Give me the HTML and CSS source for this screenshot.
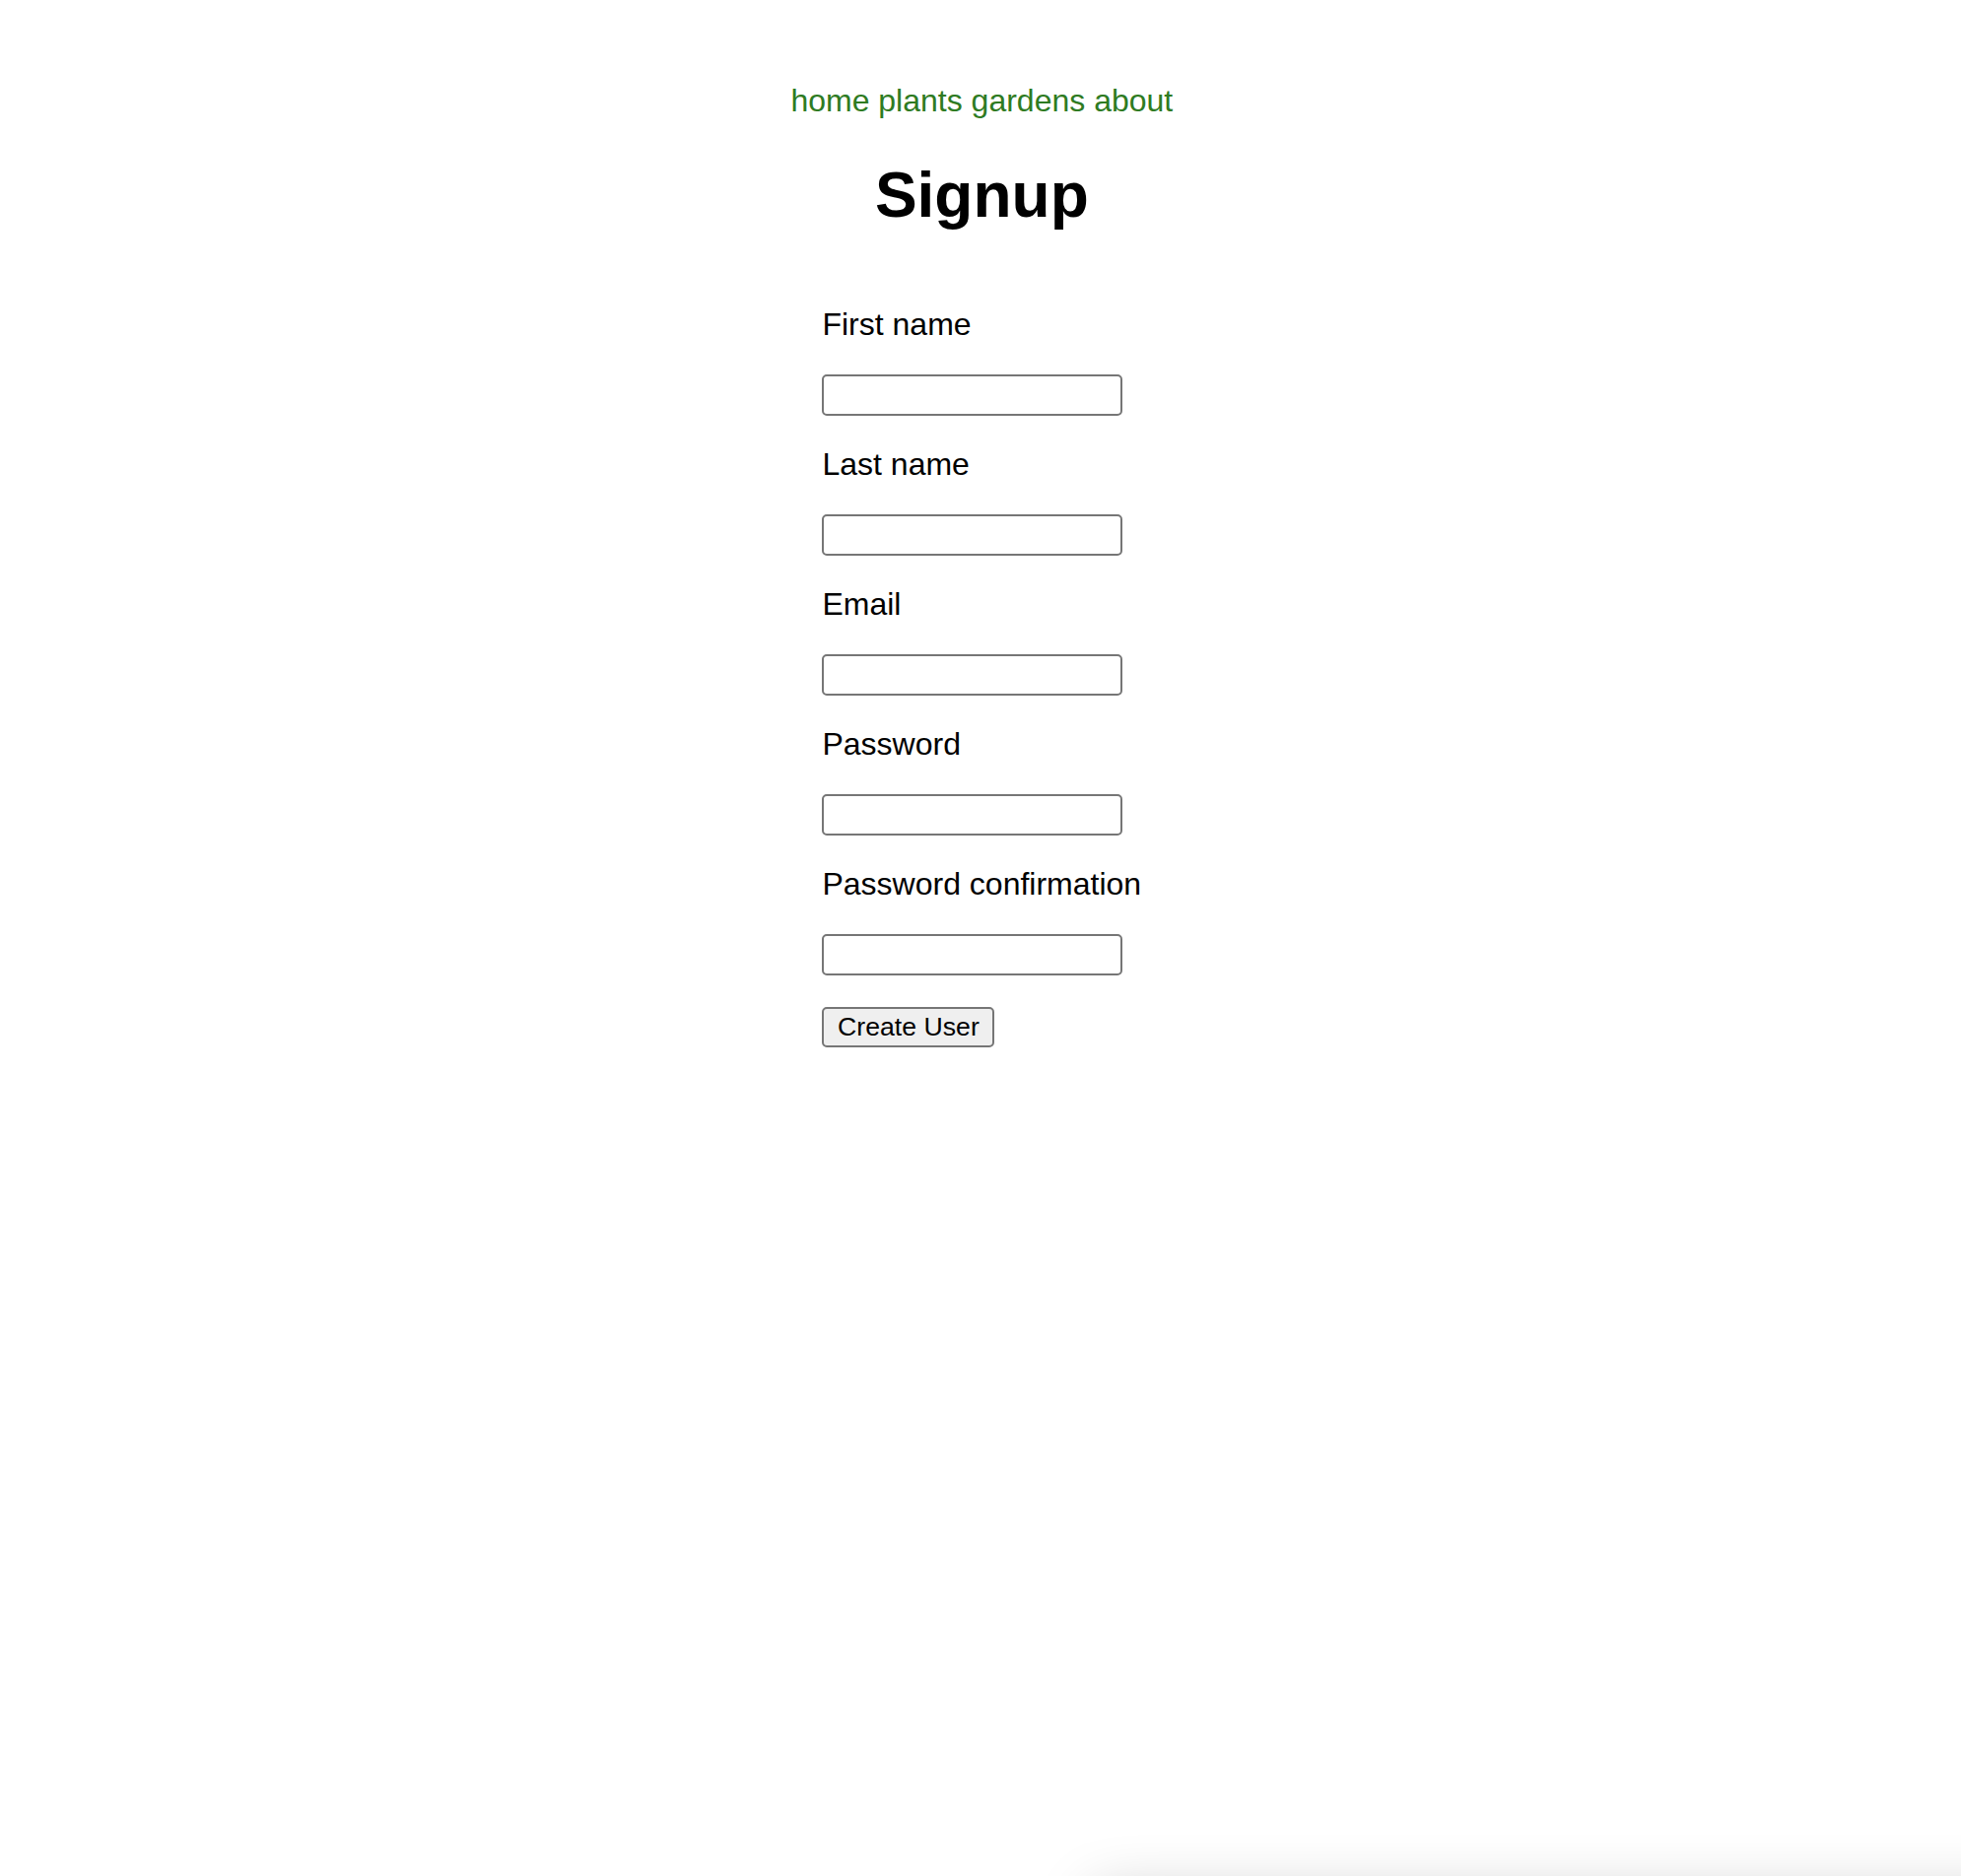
FILE: index.html
```html
<!DOCTYPE html>
<html lang="en">
<head>
<meta charset="utf-8">
<title>Signup</title>
<link rel="stylesheet" href="styles.css">
</head>
<body>
  <nav class="nav">
    <a href="#" class="nav-link">home</a>
    <a href="#" class="nav-link">plants</a>
    <a href="#" class="nav-link">gardens</a>
    <a href="#" class="nav-link">about</a>
  </nav>
  <h1 class="title">Signup</h1>
  <div class="form-wrap">
    <form class="form">
      <div class="field">
        <label class="label" for="first">First name</label>
        <input class="input" id="first" type="text">
      </div>
      <div class="field">
        <label class="label" for="last">Last name</label>
        <input class="input" id="last" type="text">
      </div>
      <div class="field">
        <label class="label" for="email">Email</label>
        <input class="input" id="email" type="email">
      </div>
      <div class="field">
        <label class="label" for="pw">Password</label>
        <input class="input" id="pw" type="password">
      </div>
      <div class="field">
        <label class="label" for="pwc">Password confirmation</label>
        <input class="input" id="pwc" type="password">
      </div>
      <button class="submit" type="button">Create User</button>
    </form>
  </div>
  <div class="edge-shadow"></div>
</body>
</html>
```

FILE: styles.css
```css
html, body {
  margin: 0;
  padding: 0;
  background: #ffffff;
}

body {
  font-family: "Liberation Sans", Arial, sans-serif;
  color: #000000;
  overflow: hidden;
  height: 1904px;
  padding-left: 2.6px;
}

.nav {
  display: flex;
  justify-content: center;
  gap: 8.9px;
  padding-top: 83.5px;
  font-size: 32px;
  line-height: 37px;
}

.nav-link {
  color: #2e7b22;
  text-decoration: none;
}

.title {
  margin: 41px 0 0;
  text-align: center;
  font-size: 64px;
  font-weight: bold;
  line-height: 73.5px;
}

.form-wrap {
  display: flex;
  justify-content: center;
  margin-top: 75.5px;
}

.form {
  display: flex;
  flex-direction: column;
  align-items: flex-start;
}

.field {
  display: flex;
  flex-direction: column;
  align-items: flex-start;
  margin-bottom: 31px;
}

.label {
  font-size: 32px;
  line-height: 37px;
  margin-bottom: 32px;
  white-space: nowrap;
}

.input {
  box-sizing: border-box;
  width: 305px;
  height: 42px;
  margin: 0;
  padding: 2px 4px;
  border: 2px solid #767676;
  border-radius: 5px;
  background: #ffffff;
  font-family: "Liberation Sans", Arial, sans-serif;
  font-size: 26.67px;
}

.submit {
  box-sizing: border-box;
  width: 175px;
  height: 41px;
  margin: 1px 0 0;
  padding: 0;
  border: 2px solid #767676;
  border-radius: 5px;
  background: #efefef;
  color: #000000;
  font-family: "Liberation Sans", Arial, sans-serif;
  font-size: 26.67px;
  line-height: 37px;
  text-align: center;
}

.edge-shadow {
  position: fixed;
  top: 1922px;
  left: 1110px;
  right: -120px;
  height: 120px;
  background: #ffffff;
  box-shadow: 0 0 60px rgba(0, 0, 0, 0.22);
}
```
